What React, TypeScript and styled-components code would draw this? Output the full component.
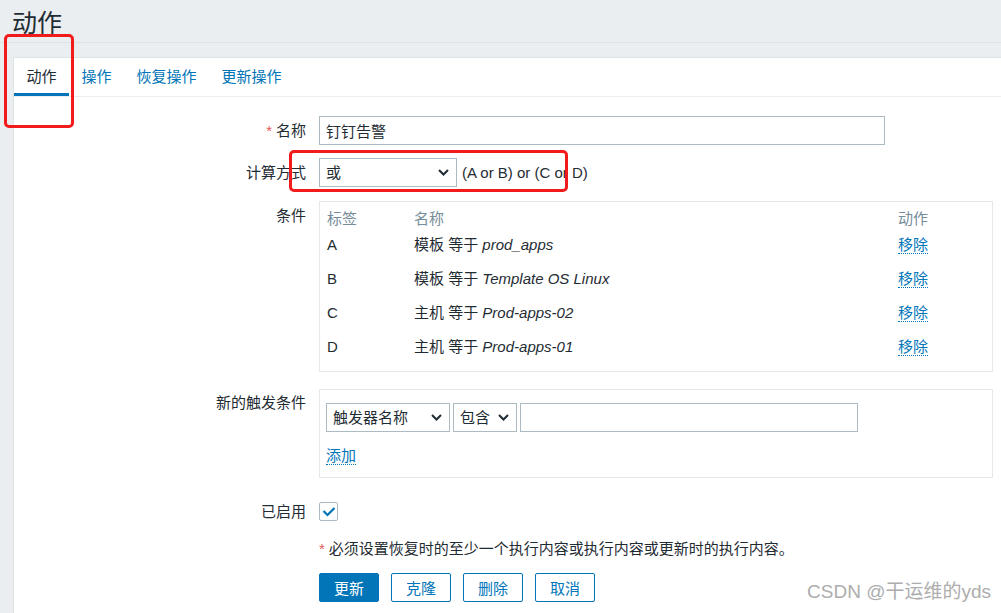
import React from "react";
import styled, { createGlobalStyle } from "styled-components";

const GlobalStyle = createGlobalStyle`
  html, body { margin: 0; padding: 0; background: #ebeef0; overflow: hidden; }
  body {
    font-family: "Liberation Sans", "Noto Sans CJK SC", sans-serif;
    font-size: 15px;
    color: #1f2c33;
  }
  * { box-sizing: border-box; }
`;

const Page = styled.div`
  position: relative;
  width: 100%;
  height: 613px;
  overflow: hidden;
  background: #ebeef0;
  display: flex;
  flex-direction: column;
`;

const Header = styled.header`
  height: 43px;
  flex: none;
  padding-left: 12px;
  display: flex;
  align-items: center;
  border-bottom: 1px solid #dce2e5;
`;

const Title = styled.h1`
  margin: 0;
  font-family: "Noto Sans CJK SC", sans-serif;
  font-size: 25px;
  font-weight: 400;
  line-height: 1;
  color: #1f2c33;
`;

const Main = styled.main`
  flex: 1;
  display: flex;
  padding: 14px 0 0 13px;
`;

const Panel = styled.section`
  flex: 1;
  background: #fff;
  border-top: 1px solid #dfe4e7;
  border-left: 1px solid #dfe4e7;
`;

const TabBar = styled.nav`
  display: flex;
  height: 39px;
  border-bottom: 1px solid #ebeef0;
`;

const Tab = styled.div<{ $active?: boolean }>`
  height: 38px;
  padding: 2px 12.5px 0;
  display: flex;
  align-items: center;
  line-height: 18px;
  color: ${(p) => (p.$active ? "#1f2c33" : "#0275b8")};
  border-bottom: 3px solid ${(p) => (p.$active ? "#0275b8" : "transparent")};
`;

const Form = styled.div`
  display: flex;
  flex-direction: column;
  padding-top: 19px;
`;

const Row = styled.div<{ $mt?: number }>`
  display: grid;
  grid-template-columns: 292px 1fr;
  column-gap: 13px;
  margin-top: ${(p) => p.$mt ?? 0}px;
`;

const Label = styled.div<{ $top?: number }>`
  text-align: right;
  line-height: 18px;
  align-self: ${(p) => (p.$top !== undefined ? "start" : "center")};
  padding-top: ${(p) => p.$top ?? 0}px;
`;

const Field = styled.div`
  grid-column: 2;
  display: flex;
  align-items: center;
`;

const Star = styled.span`
  color: #e45959;
  margin-right: 4px;
`;

const TextInput = styled.input<{ $w: number }>`
  width: ${(p) => p.$w}px;
  height: 29px;
  border: 1px solid #acbbc2;
  border-radius: 0;
  padding: 0 6px;
  font: inherit;
  color: #1f2c33;
  background: #fff;
  outline: none;
`;

const SelectBox = styled.div<{ $w: number }>`
  width: ${(p) => p.$w}px;
  height: 29px;
  border: 1px solid #acbbc2;
  padding: 0 7px 0 6px;
  display: flex;
  align-items: center;
  justify-content: space-between;
  line-height: 18px;
  background: #fff;
`;

const Expr = styled.span`
  margin-left: 5px;
  line-height: 18px;
`;

const Box = styled.div<{ $pad: string }>`
  width: 674px;
  border: 1px solid #e6e9eb;
  padding: ${(p) => p.$pad};
  display: flex;
  flex-direction: column;
`;

const CondRow = styled.div<{ $h: number; $head?: boolean }>`
  display: grid;
  grid-template-columns: 87px 1fr 87px;
  height: ${(p) => p.$h}px;
  align-items: center;
  line-height: 18px;
  color: ${(p) => (p.$head ? "#768d99" : "#1f2c33")};
`;

const Value = styled.i`
  font-style: italic;
`;

const Link = styled.a`
  justify-self: start;
  align-self: center;
  color: #0275b8;
  text-decoration: none;
  line-height: 17px;
  border-bottom: 1px dotted #0275b8;
  cursor: pointer;
`;

const Controls = styled.div`
  display: flex;
  gap: 3px;
`;

const AddLink = styled(Link)`
  align-self: flex-start;
  margin-top: 15px;
`;

const Check = styled.div`
  width: 19px;
  height: 19px;
  border: 1px solid #acbbc2;
  border-radius: 2px;
  display: flex;
  align-items: center;
  justify-content: center;
`;

const Note = styled.div`
  grid-column: 2;
  line-height: 18px;
`;

const Buttons = styled.div`
  grid-column: 2;
  display: flex;
  gap: 12px;
`;

const Button = styled.button<{ $primary?: boolean }>`
  width: 60px;
  height: 29px;
  padding: 0;
  font: inherit;
  border: 1px solid #0275b8;
  border-radius: 2px;
  background: ${(p) => (p.$primary ? "#0275b8" : "#fff")};
  color: ${(p) => (p.$primary ? "#fff" : "#0275b8")};
  cursor: pointer;
`;

const Annotation = styled.div<{ $x: number; $y: number; $w: number; $h: number }>`
  position: absolute;
  left: ${(p) => p.$x}px;
  top: ${(p) => p.$y}px;
  width: ${(p) => p.$w}px;
  height: ${(p) => p.$h}px;
  border: 3px solid #f21b1b;
  border-radius: 5px;
  pointer-events: none;
`;

const Watermark = styled.div`
  position: absolute;
  right: 10px;
  bottom: 10px;
  font-family: "Liberation Sans", "Noto Sans CJK SC", sans-serif;
  font-size: 19px;
  line-height: 22px;
  color: #adadad;
  text-shadow: 0 0 1px #fff, 0 0 2px #fff;
  pointer-events: none;
`;

const Chevron = () => (
  <svg width="11" height="7" viewBox="0 0 11 7">
    <polyline points="1,1 5.5,5.5 10,1" fill="none" stroke="#1f2c33" strokeWidth="2" />
  </svg>
);

const Select = ({ w, children }: { w: number; children: React.ReactNode }) => (
  <SelectBox $w={w}>
    <span>{children}</span>
    <Chevron />
  </SelectBox>
);

const conditions = [
  { tag: "A", kind: "模板", value: "prod_apps" },
  { tag: "B", kind: "模板", value: "Template OS Linux" },
  { tag: "C", kind: "主机", value: "Prod-apps-02" },
  { tag: "D", kind: "主机", value: "Prod-apps-01" },
];

export default function App() {
  return (
    <>
      <GlobalStyle />
      <Page>
        <Header>
          <Title>动作</Title>
        </Header>
        <Main>
          <Panel>
            <TabBar>
              <Tab $active>动作</Tab>
              <Tab>操作</Tab>
              <Tab>恢复操作</Tab>
              <Tab>更新操作</Tab>
            </TabBar>
            <Form>
              <Row>
                <Label>
                  <Star>*</Star>名称
                </Label>
                <Field>
                  <TextInput $w={566} value="钉钉告警" readOnly />
                </Field>
              </Row>
              <Row $mt={13}>
                <Label>计算方式</Label>
                <Field>
                  <Select w={138}>或</Select>
                  <Expr>(A or B) or (C or D)</Expr>
                </Field>
              </Row>
              <Row $mt={14}>
                <Label $top={6}>条件</Label>
                <Field>
                  <Box $pad="8px 7px 7px">
                    <CondRow $h={18} $head>
                      <span>标签</span>
                      <span>名称</span>
                      <span>动作</span>
                    </CondRow>
                    {conditions.map((c) => (
                      <CondRow $h={34} key={c.tag}>
                        <span>{c.tag}</span>
                        <span>
                          {c.kind} 等于 <Value>{c.value}</Value>
                        </span>
                        <Link>移除</Link>
                      </CondRow>
                    ))}
                  </Box>
                </Field>
              </Row>
              <Row $mt={17}>
                <Label $top={5}>新的触发条件</Label>
                <Field>
                  <Box $pad="13px 7px 12px 6px">
                    <Controls>
                      <Select w={124}>触发器名称</Select>
                      <Select w={64}>包含</Select>
                      <TextInput $w={338} defaultValue="" />
                    </Controls>
                    <AddLink>添加</AddLink>
                  </Box>
                </Field>
              </Row>
              <Row $mt={24}>
                <Label>已启用</Label>
                <Field>
                  <Check>
                    <svg width="14" height="11" viewBox="0 0 14 11">
                      <polyline points="1.5,5 5.5,9 12.5,2" fill="none" stroke="#0275b8" strokeWidth="2.2" />
                    </svg>
                  </Check>
                </Field>
              </Row>
              <Row $mt={19}>
                <Note>
                  <Star>*</Star>必须设置恢复时的至少一个执行内容或执行内容或更新时的执行内容。
                </Note>
              </Row>
              <Row $mt={15}>
                <Buttons>
                  <Button $primary>更新</Button>
                  <Button>克隆</Button>
                  <Button>删除</Button>
                  <Button>取消</Button>
                </Buttons>
              </Row>
            </Form>
          </Panel>
        </Main>
        <Annotation $x={4} $y={34} $w={70} $h={94} />
        <Annotation $x={289} $y={150} $w={279} $h={42} />
        <Watermark>CSDN @干运维的yds</Watermark>
      </Page>
    </>
  );
}
